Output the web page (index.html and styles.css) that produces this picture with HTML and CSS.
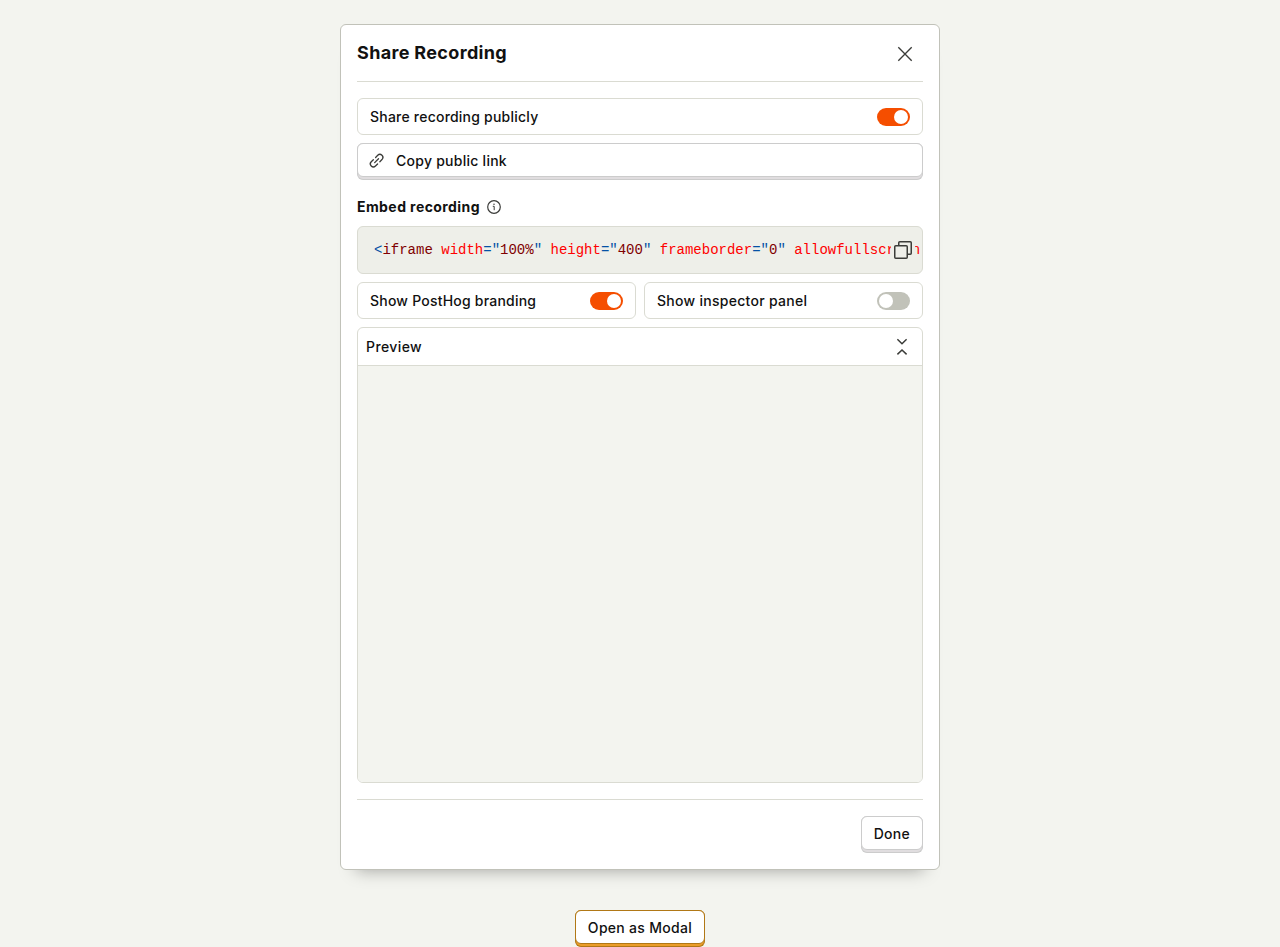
FILE: index.html
```html
<!DOCTYPE html>
<html lang="en">
<head>
<meta charset="utf-8">
<title>Share Recording</title>
<link rel="stylesheet" href="styles.css">
</head>
<body>
<main class="modal">
  <header class="modal-header">
    <h3>Share Recording</h3>
    <button class="close" aria-label="Close">
      <svg width="24" height="24" viewBox="0 0 24 24" fill="none" stroke="currentColor" stroke-width="1.350"><path d="M5.300 5.300l13.400 13.400M18.700 5.300l-13.400 13.400"/></svg>
    </button>
  </header>
  <section class="modal-content">
    <label class="switch-row">Share recording publicly<span class="switch on"></span></label>
    <button class="btn btn-full"><span class="chrome">
      <svg class="link-icon" width="18" height="18" viewBox="-9 -9 18 18" fill="none" stroke="currentColor" stroke-width="1.300" stroke-linecap="round"><g transform="translate(-.4 -.3) rotate(-45)"><path d="M-1.600 -3H-4.600a3 3 0 0 0 0 6H-1.600M1.600 -3H4.600a3 3 0 0 1 0 6H1.600M-2.700 0H2.700"/></g></svg>
      Copy public link</span></button>
    <h4>Embed recording
      <svg width="14" height="14" viewBox="0 0 14 14" fill="none" stroke="currentColor"><circle cx="7" cy="7" r="6.300" stroke-width="1.200"/><path d="M5.800 6.300h1.400v3.900" stroke-width="1"/><circle cx="7" cy="4.200" r=".75" fill="currentColor" stroke="none"/></svg>
    </h4>
    <div class="code">
      <code><span class="p">&lt;</span><span class="t">iframe</span> <span class="a">width</span><span class="p">="</span><span class="t">100%</span><span class="p">"</span> <span class="a">height</span><span class="p">="</span><span class="t">400</span><span class="p">"</span> <span class="a">frameborder</span><span class="p">="</span><span class="t">0</span><span class="p">"</span> <span class="a">allowfullscreen</span></code>
      <button class="copy" aria-label="Copy">
        <svg width="24" height="24" viewBox="0 0 24 24" fill="none" stroke="currentColor" stroke-width="1.500" stroke-linejoin="round"><rect x="3.750" y="7.750" width="12.500" height="12.500" rx="1"/><path d="M7.750 7.500V4.750a1 1 0 0 1 1-1h10.500a1 1 0 0 1 1 1v10.500a1 1 0 0 1-1 1H16.500"/></svg>
      </button>
    </div>
    <div class="pair">
      <label class="switch-row">Show PostHog branding<span class="switch on"></span></label>
      <label class="switch-row inspector">Show inspector panel<span class="switch"></span></label>
    </div>
    <div class="preview">
      <div class="preview-header">Preview
        <svg width="24" height="24" viewBox="0 0 24 24" fill="none" stroke="currentColor" stroke-width="1.500"><path d="M7.400 4.300L12 8.700l4.600-4.400M7.400 19.400L12 15l4.600 4.400"/></svg>
      </div>
      <div class="preview-body"></div>
    </div>
  </section>
  <footer class="modal-footer"><button class="btn"><span class="chrome">Done</span></button></footer>
</main>
<button class="btn btn-primary"><span class="chrome">Open as Modal</span></button>
</body>
</html>
```

FILE: styles.css
```css
* { box-sizing: border-box; }
html { overflow: hidden; }
body {
  margin: 0;
  padding-top: 24px;
  height: 947px;
  overflow: hidden;
  display: flex;
  flex-direction: column;
  align-items: center;
  background: #f3f4ef;
  color: #111;
  font: 500 14px/20px Inter, sans-serif;
  letter-spacing: .22px;
}
h3, h4 { margin: 0; }
button { font: inherit; letter-spacing: inherit; color: inherit; border: 0; padding: 0; background: none; }
svg { display: block; flex: none; color: #3b3c39; }
.modal {
  width: 600px;
  height: 846px;
  flex: none;
  padding: 0 16px;
  background: #fff;
  border: 1px solid #c1c2b9;
  border-radius: 6px;
  box-shadow: 0 16px 16px -16px rgba(0, 0, 0, .35);
}
.modal-header {
  height: 57px;
  display: flex;
  align-items: center;
  justify-content: space-between;
  border-bottom: 1px solid #dadbd2;
}
.modal-header h3 { font-size: 18px; line-height: 28px; font-weight: 700; letter-spacing: .34px; }
.close { padding: 2px 6px 0 0; }
.modal-content { padding: 16px 0; }
.switch-row {
  height: 37px;
  padding: 0 12px;
  display: flex;
  align-items: center;
  justify-content: space-between;
  border: 1px solid #dadbd2;
  border-radius: 6px;
}
.inspector { letter-spacing: .28px; }
.switch {
  width: 33px;
  height: 18px;
  padding: 2px;
  display: flex;
  border-radius: 9px;
  background: #c1c2b9;
}
.switch::after { content: ""; width: 14px; height: 14px; border-radius: 50%; background: #fff; }
.switch.on { justify-content: flex-end; background: #f54e00; }
.btn {
  display: block;
  height: 37px;
  padding-bottom: 2px;
  border: 1px solid #ccc;
  border-top: 0;
  border-radius: 6px;
  background: #e0dddf;
  letter-spacing: .26px;
  flex: none;
}
.chrome {
  display: flex;
  align-items: center;
  height: 34px;
  margin: 0 -1px;
  padding: 1px 12px 0;
  border: 1px solid #ccc;
  border-radius: 6px;
  background: #fff;
}
.btn .chrome { position: relative; top: 0; margin-bottom: 0; }
.btn { display: flex; align-items: flex-start; }
.chrome { flex: 1 0 auto; }
.btn-full { width: 100%; margin-top: 8px; }
.btn-full .chrome { padding-left: 10px; gap: 10px; }
h4 {
  display: flex;
  align-items: center;
  gap: 7px;
  margin: 16px 0 8px;
  height: 22px;
  font-weight: 700;
  letter-spacing: .42px;
}
.code {
  position: relative;
  height: 48px;
  padding: 13px 0 0 16px;
  border: 1px solid #dadbd2;
  border-radius: 6px;
  background: #eeefe9;
  overflow: hidden;
}
code { display: block; white-space: nowrap; font: 14px/20px "Liberation Mono", monospace; letter-spacing: 0; }
.p { color: #0451a5; }
.t { color: #800000; }
.a { color: #f00; }
.copy { position: absolute; top: 11px; right: 7px; background: #eeefe9; }
.pair { display: grid; grid-template-columns: 1fr 1fr; gap: 8px; margin: 8px 0; }
.preview { height: 456px; border: 1px solid #dadbd2; border-radius: 6px; overflow: hidden; }
.preview-header {
  height: 38px;
  padding: 0 8px;
  display: flex;
  align-items: center;
  justify-content: space-between;
  border-bottom: 1px solid #dadbd2;
  letter-spacing: .4px;
}
.preview-body { height: 416px; background: #f3f4ef; }
.modal-footer {
  display: flex;
  justify-content: flex-end;
  padding-top: 16px;
  border-top: 1px solid #dadbd2;
}
.btn-primary { margin-top: 40px; border-color: #b17816; background: #eb9d2a; letter-spacing: .3px; }
.btn-primary .chrome { border-color: #b17816; }
```
